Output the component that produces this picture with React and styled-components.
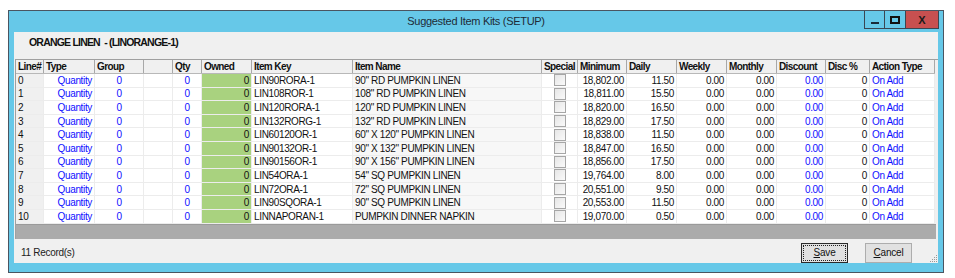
import React from "react";
import styled, { createGlobalStyle } from "styled-components";

const GlobalStyle = createGlobalStyle`
  body {
    margin: 0;
    background: #ffffff;
    font-family: "Liberation Sans", Arial, sans-serif;
  }
`;

const cols = "28px 51px 49px 29px 29px 50px 101px 189px 36px 49px 50px 50px 50px 49px 44px 65px";

const rows = [
  ["0", "LIN90RORA-1", "90\" RD PUMPKIN LINEN", "18,802.00", "11.50"],
  ["1", "LIN108ROR-1", "108\" RD PUMPKIN LINEN", "18,811.00", "15.50"],
  ["2", "LIN120RORA-1", "120\" RD PUMPKIN LINEN", "18,820.00", "16.50"],
  ["3", "LIN132RORG-1", "132\" RD PUMPKIN LINEN", "18,829.00", "17.50"],
  ["4", "LIN60120OR-1", "60\" X 120\" PUMPKIN LINEN", "18,838.00", "11.50"],
  ["5", "LIN90132OR-1", "90\" X 132\" PUMPKIN LINEN", "18,847.00", "16.50"],
  ["6", "LIN90156OR-1", "90\" X 156\" PUMPKIN LINEN", "18,856.00", "17.50"],
  ["7", "LIN54ORA-1", "54\" SQ PUMPKIN LINEN", "19,764.00", "8.00"],
  ["8", "LIN72ORA-1", "72\" SQ PUMPKIN LINEN", "20,551.00", "9.50"],
  ["9", "LIN90SQORA-1", "90\" SQ PUMPKIN LINEN", "20,553.00", "11.50"],
  ["10", "LINNAPORAN-1", "PUMPKIN DINNER NAPKIN", "19,070.00", "0.50"],
];

const headers = ["Line#", "Type", "Group", "", "Qty", "Owned", "Item Key", "Item Name", "Special", "Minimum", "Daily", "Weekly", "Monthly", "Discount", "Disc %", "Action Type"];

const Page = styled.div`
  padding: 10px 0 0 8px;
`;

const Window = styled.div`
  width: 934px;
  height: 261px;
  border: 1px solid #4a5561;
  background: #66c8e8;
  display: flex;
  flex-direction: column;
`;

const TitleBar = styled.div`
  height: 21px;
  display: flex;
  align-items: flex-start;
  position: relative;
`;

const Title = styled.div`
  flex: 1;
  text-align: center;
  font-size: 11px;
  letter-spacing: -0.3px;
  line-height: 20px;
  color: #1e2b36;
`;

const Controls = styled.div`
  position: absolute;
  right: 4px;
  top: 0;
  display: flex;
`;

const Ctrl = styled.div`
  width: ${(p) => p.w}px;
  height: 17px;
  border: 1px solid #3a4652;
  border-top: none;
  margin-left: -1px;
  background: ${(p) => (p.close ? "#c75050" : "transparent")};
  display: flex;
  align-items: center;
  justify-content: center;
  font-weight: bold;
  font-size: 11px;
  color: #1a1a1a;
`;

const MinGlyph = styled.div`
  width: 8px;
  height: 2px;
  background: #1a2a38;
  margin-top: 7px;
`;

const MaxGlyph = styled.div`
  width: 6px;
  height: 4px;
  border: 2px solid #111;
`;

const Content = styled.div`
  flex: 1;
  margin: 0 5px 9px 5px;
  background: #f0f0f0;
  display: flex;
  flex-direction: column;
  position: relative;
`;

const Caption = styled.div`
  height: 27px;
  padding-left: 15px;
  font-size: 10.5px;
  letter-spacing: -0.8px;
  font-weight: bold;
  line-height: 21px;
  color: #111;
  white-space: pre;
`;

const Grid = styled.div`
  margin-left: 1px;
  width: 922px;
  height: 179px;
  border-top: 1px solid #a0a0a0;
  border-left: 1px solid #a0a0a0;
  display: flex;
  flex-direction: column;
  background: #f0f0f0;
`;

const HeadRow = styled.div`
  display: grid;
  grid-template-columns: ${cols};
  height: 13px;
  border-bottom: 1px solid #b8b8b8;
  width: 919px;
`;

const HeadCell = styled.div`
  border-right: 1px solid #a8a8a8;
  font-size: 10px;
  letter-spacing: -0.6px;
  font-weight: bold;
  line-height: 13px;
  padding-left: 2px;
  color: #111;
  white-space: nowrap;
  overflow: hidden;
`;

const Body = styled.div`
  display: flex;
  flex-direction: column;
  width: 919px;
`;

const Row = styled.div`
  display: grid;
  grid-template-columns: ${cols};
  height: 13.6px;
`;

const Cell = styled.div`
  background: ${(p) => p.bg || "#ffffff"};
  border-right: 1px solid #ececec;
  border-bottom: 1px solid #ececec;
  font-size: 10px;
  letter-spacing: -0.35px;
  line-height: 13px;
  color: ${(p) => (p.blue ? "#1010ff" : "#111")};
  padding: 0 2px;
  white-space: nowrap;
  overflow: hidden;
  display: flex;
  align-items: center;
  justify-content: ${(p) => (p.align === "right" ? "flex-end" : p.align === "center" ? "center" : "flex-start")};
`;

const Check = styled.div`
  width: 10px;
  height: 10px;
  border: 1px solid #a6a6a6;
  background: linear-gradient(135deg, #e6e6e6, #fafafa);
`;

const Band = styled.div`
  margin-top: auto;
  height: 14px;
  background: #ababab;
  border-top: 1px solid #9a9a9a;
  width: 920px;
`;

const Footer = styled.div`
  flex: 1;
  display: flex;
  align-items: center;
  padding: 0 0 0 7px;
  position: relative;
`;

const Records = styled.div`
  font-size: 10px;
  letter-spacing: -0.3px;
  color: #222;
  flex: 1;
  margin-top: 2px;
`;

const Button = styled.div`
  width: ${(p) => (p.focus ? 43 : 45)}px;
  height: ${(p) => (p.focus ? 16 : 18)}px;
  border: 1px solid ${(p) => (p.focus ? "#2a2a2a" : "#adadad")};
  background: #e1e1e1;
  margin-right: ${(p) => p.mr}px;
  font-size: 10px;
  letter-spacing: -0.2px;
  color: #111;
  display: flex;
  align-items: center;
  justify-content: center;
  margin-top: 3px;
  outline: ${(p) => (p.focus ? "1px dotted #222" : "none")};
  outline-offset: -3px;
  padding: ${(p) => (p.focus ? "1px" : "0")};
`;

const Grip = styled.svg`
  position: absolute;
  right: 0;
  bottom: 0;
`;

export default function App() {
  return (
    <>
      <GlobalStyle />
      <Page>
        <Window>
          <TitleBar>
            <Title>Suggested Item Kits (SETUP)</Title>
            <Controls>
              <Ctrl w={19}><MinGlyph /></Ctrl>
              <Ctrl w={20}><MaxGlyph /></Ctrl>
              <Ctrl w={32} close>X</Ctrl>
            </Controls>
          </TitleBar>
          <Content>
            <Caption>{"ORANGE LINEN  - (LINORANGE-1)"}</Caption>
            <Grid>
              <HeadRow>
                {headers.map((h, i) => (
                  <HeadCell key={i}>{h}</HeadCell>
                ))}
              </HeadRow>
              <Body>
                {rows.map((r) => (
                  <Row key={r[0]}>
                    <Cell bg="#f0f0f0">{r[0]}</Cell>
                    <Cell blue align="right">Quantity</Cell>
                    <Cell blue align="center">0</Cell>
                    <Cell />
                    <Cell blue align="center">0</Cell>
                    <Cell bg="#a9d27f" align="right">0</Cell>
                    <Cell>{r[1]}</Cell>
                    <Cell bg="#f7f7f7">{r[2]}</Cell>
                    <Cell align="center"><Check /></Cell>
                    <Cell align="right">{r[3]}</Cell>
                    <Cell align="right">{r[4]}</Cell>
                    <Cell align="right">0.00</Cell>
                    <Cell align="right">0.00</Cell>
                    <Cell blue align="right">0.00</Cell>
                    <Cell align="right">0</Cell>
                    <Cell blue>On Add</Cell>
                  </Row>
                ))}
              </Body>
              <Band />
            </Grid>
            <Footer>
              <Records>11 Record(s)</Records>
              <Button focus mr={17}><u>S</u>ave</Button>
              <Button mr={26}><u>C</u>ancel</Button>
              <Grip width="10" height="10" viewBox="0 0 10 10">
                <g fill="#9a9a9a">
                  <rect x="8" y="2" width="1" height="1" />
                  <rect x="6" y="4" width="1" height="1" />
                  <rect x="8" y="4" width="1" height="1" />
                  <rect x="4" y="6" width="1" height="1" />
                  <rect x="6" y="6" width="1" height="1" />
                  <rect x="8" y="6" width="1" height="1" />
                  <rect x="2" y="8" width="1" height="1" />
                  <rect x="4" y="8" width="1" height="1" />
                  <rect x="6" y="8" width="1" height="1" />
                  <rect x="8" y="8" width="1" height="1" />
                </g>
              </Grip>
            </Footer>
          </Content>
        </Window>
      </Page>
    </>
  );
}
